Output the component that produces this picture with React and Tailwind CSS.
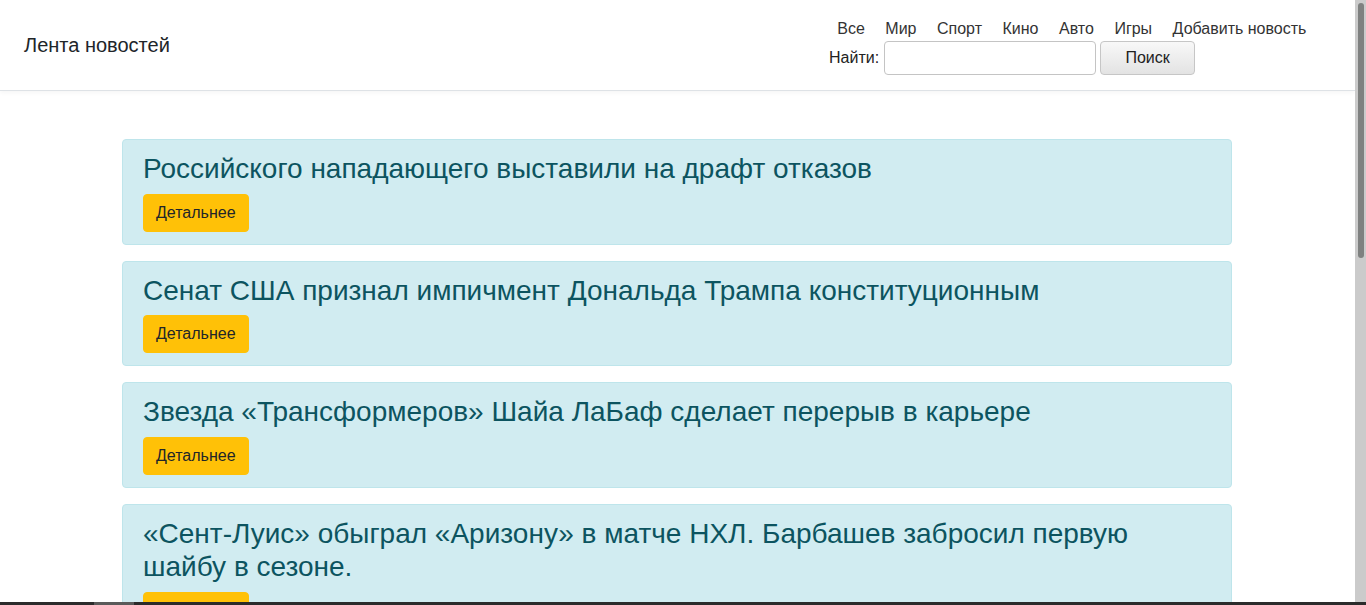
const news = [
  "Российского нападающего выставили на драфт отказов",
  "Сенат США признал импичмент Дональда Трампа конституционным",
  "Звезда «Трансформеров» Шайа ЛаБаф сделает перерыв в карьере",
  "«Сент-Луис» обыграл «Аризону» в матче НХЛ. Барбашев забросил первую шайбу в сезоне.",
  "В Москве открылась выставка современного искусства",
];

const links = ["Все", "Мир", "Спорт", "Кино", "Авто", "Игры", "Добавить новость"];

export default function App() {
  return (
    <div className="h-[605px] flex flex-col overflow-hidden bg-white font-['Liberation_Sans',Arial,sans-serif] text-[#212529]">
      <div className="flex-1 flex min-h-0">
        <div className="flex-1 min-w-0 overflow-hidden">
          {/* Header */}
          <header className="flex items-center pl-6 pr-[37px] py-4 border-b border-[#dee2e6] shadow-[0_2px_4px_rgba(0,0,0,0.04)]">
            <div className="text-[20px] leading-[30px]">Лента новостей</div>
            <div className="ml-auto w-[489px] mt-px -mb-px">
              <nav className="flex text-[16px] leading-6 text-[#333] -ml-0.5">
                {links.map((l) => (
                  <a key={l} href="#" className="px-[10.25px]">
                    {l}
                  </a>
                ))}
              </nav>
              <form className="flex items-center text-[16px] text-[#222]" onSubmit={(e) => e.preventDefault()}>
                <span>Найти:</span>
                <input
                  type="text"
                  className="ml-[5px] w-[212px] h-[34px] border border-[#c4c4c4] rounded-[4px] bg-white px-2"
                />
                <button
                  type="submit"
                  className="ml-1 w-[95px] h-[34px] border border-[#c6c6c6] rounded-[4px] bg-gradient-to-b from-[#f8f8f8] to-[#e3e3e3] text-[#222]"
                >
                  Поиск
                </button>
              </form>
            </div>
          </header>

          {/* News list */}
          <main className="w-[1110px] ml-[122px] mt-12 flex flex-col gap-4">
            {news.map((t) => (
              <div key={t} className="bg-[#d1ecf1] border border-[#bee5eb] rounded-[4px] px-5 py-3">
                <h3 className="text-[28px] leading-[1.2] text-[#0c5460] mb-2">{t}</h3>
                <button className="bg-[#ffc107] border border-[#ffc107] rounded-[4px] px-3 py-1.5 text-[16px] leading-6 text-[#212529]">
                  Детальнее
                </button>
              </div>
            ))}
          </main>
        </div>

        {/* vertical scrollbar */}
        <div className="w-[11px] bg-[#cbcbcb] pt-[3px] flex justify-center">
          <div className="w-[6px] h-[255px] rounded-full bg-[#7f8180]" />
        </div>
      </div>

      {/* horizontal bar */}
      <div className="h-[3px] bg-[#2b2b2b] flex">
        <div className="ml-[94px] w-[40px] bg-[#5a5a5a]" />
      </div>
    </div>
  );
}
